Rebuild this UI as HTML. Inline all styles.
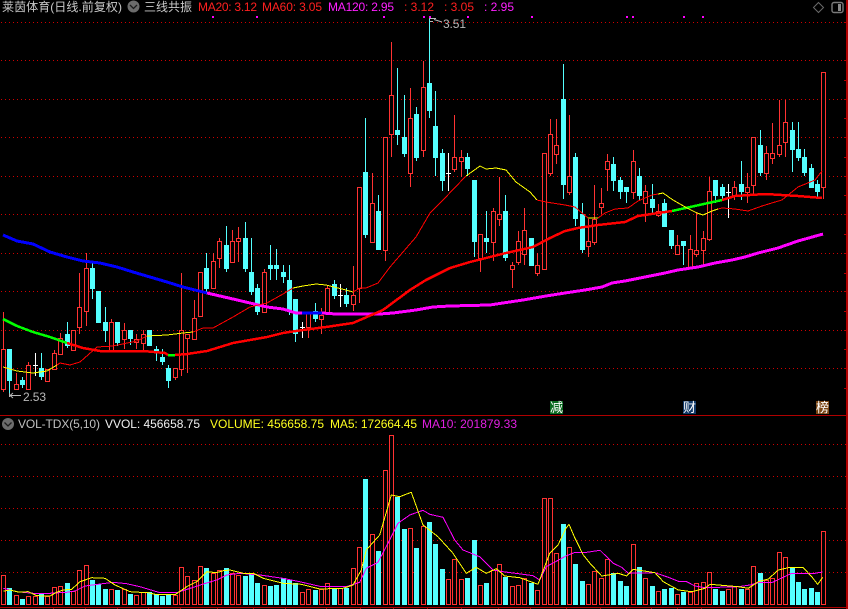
<!DOCTYPE html>
<html lang="zh">
<head>
<meta charset="utf-8">
<title>莱茵体育</title>
<style>
html,body{margin:0;padding:0;background:#000;width:848px;height:609px;overflow:hidden}
svg{display:block;position:absolute;left:0;top:0;overflow:hidden}
text{font-family:"Liberation Sans","Noto Sans CJK SC","WenQuanYi Zen Hei",sans-serif;font-size:12px}
</style>
</head>
<body>
<svg id="s" width="848" height="609" viewBox="0 0 848 609" xmlns="http://www.w3.org/2000/svg">
<g id="grid" shape-rendering="crispEdges"></g>
<g id="candles" shape-rendering="crispEdges"></g>
<g id="lines" fill="none" shape-rendering="crispEdges"></g>
<g id="marks" fill="#ff00ff" shape-rendering="crispEdges"></g>

<g>
<text x="2" y="11" fill="#c8c8c8" textLength="120" lengthAdjust="spacingAndGlyphs">莱茵体育(日线.前复权)</text>
<circle cx="133.500" cy="6.500" r="6" fill="#6c6c6c"/>
<path d="M130 5l3.500 3.500L137 5" stroke="#1c1c1c" stroke-width="1.300" fill="none"/>
<text x="144" y="11" fill="#c8c8c8" textLength="48" lengthAdjust="spacingAndGlyphs">三线共振</text>
<text x="198" y="11" fill="#ff2020" textLength="59">MA20: 3.12</text>
<text x="262" y="11" fill="#ff2020" textLength="60">MA60: 3.05</text>
<text x="328" y="11" fill="#ff20ff" textLength="66">MA120: 2.95</text>
<text x="404" y="11" fill="#ff2020" textLength="30">: 3.12</text>
<text x="444" y="11" fill="#ff2020" textLength="30">: 3.05</text>
<text x="484" y="11" fill="#ff20ff" textLength="30">: 2.95</text>
<path d="M818.500 2.500l5 5-5 5-5-5z" fill="none" stroke="#6a6a6a" stroke-width="1"/>
<rect x="832" y="2.500" width="11" height="10" rx="2" fill="none" stroke="#7a7a7a" stroke-width="1.400"/>
<rect x="838" y="4" width="3" height="7" fill="#8a8a8a"/>

<path d="M429.500 18V19M430 18.500H436M430 21.500H433M434 19.500L442 22" stroke="#b8b8b8" stroke-width="1" fill="none"/>
<text x="443" y="28" fill="#b8b8b8" textLength="23">3.51</text>
<path d="M9.500 393V397M10 395.500H21M10 395.500L13 393M10 395.500L13 398" stroke="#b8b8b8" stroke-width="1" fill="none"/>
<text x="23" y="401" fill="#b8b8b8" textLength="23">2.53</text>

<rect x="550" y="401" width="13" height="13" fill="#0a6a20"/>
<text x="550" y="412" fill="#fff" style="font-size:13px">减</text>
<rect x="683" y="401" width="13" height="13" fill="#123a68"/>
<text x="683" y="412" fill="#fff" style="font-size:13px">财</text>
<rect x="816" y="401" width="13" height="13" fill="#7a4514"/>
<text x="816" y="412" fill="#fff" style="font-size:13px">榜</text>

<circle cx="8" cy="424" r="6" fill="#6c6c6c"/>
<path d="M4.500 422.500l3.500 3.500 3.500-3.500" stroke="#1c1c1c" stroke-width="1.300" fill="none"/>
<text x="18" y="428" fill="#c0c0c0" textLength="82">VOL-TDX(5,10)</text>
<text x="105" y="428" fill="#f0f0f0" textLength="95">VVOL: 456658.75</text>
<text x="210" y="428" fill="#ffff20" textLength="114">VOLUME: 456658.75</text>
<text x="330" y="428" fill="#ffff20" textLength="87">MA5: 172664.45</text>
<text x="422" y="428" fill="#e020e0" textLength="95">MA10: 201879.33</text>
</g>
</svg>
<script>
var NS='http://www.w3.org/2000/svg';
function el(p,n,a){var e=document.createElementNS(NS,n);for(var k in a)e.setAttribute(k,a[k]);document.getElementById(p).appendChild(e);return e}
var RED='#ff3232',CY='#54ffff',DOT='#d00000';
[22,60,99,137,176,214,253,291,330,368,444,476,508,540,572].forEach(function(y){
  el('grid','line',{x1:1,x2:846,y1:y+.5,y2:y+.5,stroke:DOT,'stroke-width':1,'stroke-dasharray':'1 3'});
});
el('grid','rect',{x:0,y:415,width:848,height:1,fill:'#b00000'});
el('grid','rect',{x:0,y:607,width:848,height:1,fill:'#b00000'});
el('grid','rect',{x:846,y:0,width:2,height:609,fill:'#b00000'});
[22,60,80,99,118,137,157,176,195,214,234,253,273,291,311,330,349,368,388].forEach(function(y){
  el('grid','rect',{x:844,y:y,width:2,height:1,fill:'#b00000'});
});
[53,85,117,148,180,217,253,285,326,360,393,427,461,498,530,566,600,626,651,677,701].forEach(function(x){
  el('grid','rect',{x:x,y:608,width:1,height:1,fill:'#b00000'});
});
// type,top,bottom,high,low,volumeTopZoom
var D=[
'r,349,389,312,392,496','c,349,380,349,397,534','r,384,389,373,389,556','c,380,384,377,388,567','r,365,389,362,389,559',
'w,365,365,353,376,559','c,368,376,353,380,552','r,369,381,369,381,559','r,353,369,350,369,532','r,338,354,333,354,529',
'c,334,345,322,348,519','r,330,350,330,350,544','r,307,327,273,334,481','r,268,311,253,326,466','c,268,288,263,299,510',
'c,291,322,291,322,522','c,322,330,307,342,537','r,322,350,319,350,538','c,322,342,322,346,540','r,330,339,323,349,538',
'c,330,338,330,345,552','r,339,342,334,349,556','r,334,343,330,350,547','c,330,345,330,345,547','c,349,351,346,361,552',
'c,357,361,349,365,558','c,368,380,365,388,554','r,368,377,368,380,556','r,330,369,273,376,472','r,334,338,334,373,499',
'r,318,339,300,339,511','r,272,316,272,316,469','c,268,288,253,292,474','r,261,288,253,288,490','r,241,258,238,268,481',
'c,245,268,226,272,474','r,241,262,230,262,490','r,238,241,227,262,495','c,238,268,222,272,498','c,272,291,238,295,490',
'c,288,311,284,315,519','r,272,312,269,312,526','c,265,268,245,280,528','c,265,268,249,280,525','c,272,276,265,283,505',
'c,280,311,265,315,510','c,299,333,299,342,520','w,327,327,322,338,546','r,313,327,313,338,538','c,311,318,303,322,540',
'r,315,319,308,334,538','r,288,312,285,312,520','c,284,295,280,299,535','w,295,295,284,307,535','c,295,303,288,307,533',
'r,295,304,266,311,475','r,187,288,187,303,412','c,172,234,118,238,207','r,203,242,173,242,373','c,211,249,195,249,423',
'r,137,250,137,261,181','r,95,134,42,157,75','c,130,134,68,145,260','c,137,153,95,157,357','r,118,173,88,187,355',
'c,114,157,107,161,414','r,87,150,61,157,348','c,83,110,18,118,336','c,126,157,91,176,402','c,153,180,149,191,477',
'w,173,173,153,191,508','r,157,169,115,172,448','r,157,161,150,177,508','c,157,168,153,176,504','c,180,241,180,257,390',
'r,234,258,234,272,526','c,238,241,211,253,519','r,211,242,208,261,481','r,214,219,177,226,463','c,211,257,195,261,500',
'r,265,269,262,288,529','r,241,262,231,265,526','r,230,254,208,265,504','c,238,265,238,265,519','r,265,273,253,276,541',
'r,153,269,153,269,265','r,134,173,119,176,265','r,145,154,119,164,430','c,99,184,64,199,342','r,176,192,115,195,412',
'c,157,218,153,226,462','c,214,249,203,253,513','r,241,246,219,257,523','r,219,242,185,245,484','r,203,207,188,214,504',
'r,161,169,154,191,447','c,164,180,157,191,490','c,180,191,177,199,513','c,187,191,187,203,528','r,161,192,150,199,403',
'c,176,195,168,200,471','r,191,203,185,222,504','c,199,207,184,213,528','r,211,215,204,217,544','c,203,226,199,226,537',
'c,230,245,230,249,534','r,245,254,235,254,553','c,241,245,241,265,546','r,249,268,235,268,546','r,250,254,212,257,520',
'r,238,250,231,267,517','r,191,239,177,241,487','c,180,195,180,203,537','c,187,195,184,200,543','w,192,192,184,218,537',
'r,187,195,181,200,528','c,184,191,161,200,537','r,187,192,173,203,538','r,137,185,137,195,468','c,145,172,130,176,489',
'r,153,173,146,180,510','r,153,158,123,164,505','r,145,154,100,157,427','r,122,142,100,157,442','c,130,149,122,172,472',
'c,149,157,122,161,516','c,157,172,149,176,537','c,168,187,164,187,534','c,184,191,180,197,546','r,72,187,72,199,364'
];
D.forEach(function(s,i){
  var a=s.split(','),t=a[0],top=+a[1],bot=+a[2],hi=+a[3],lo=+a[4],v=410+a[5]/3,c=Math.floor(3.4+6.36*i);
  var col=t=='c'?CY:t=='w'?'#ffffff':RED;
  if(hi<top)el('candles','rect',{x:c,y:hi,width:1,height:top-hi,fill:col});
  if(lo>bot)el('candles','rect',{x:c,y:bot,width:1,height:lo-bot,fill:col});
  if(t=='c')el('candles','rect',{x:c-2,y:top,width:5,height:bot-top+1,fill:CY});
  else if(t=='w'){el('candles','rect',{x:c-2,y:top,width:5,height:1,fill:'#fff'});}
  else el('candles','rect',{x:c-1.5,y:top+.5,width:4,height:bot-top,fill:'#000',stroke:RED,'stroke-width':1});
  var vt=Math.round(v);
  if(t=='c')el('candles','rect',{x:c-2,y:vt,width:5,height:605-vt,fill:CY});
  else el('candles','rect',{x:c-1.5,y:vt+.5,width:4,height:605-vt-1,fill:'#000',stroke:RED,'stroke-width':1});
});
function pl(c,w,p){el('lines','polyline',{points:p,stroke:c,'stroke-width':w,'stroke-linejoin':'round'})}
var Y='#ffff00',M='#ff00ff',R='#ff0000',G='#00ff00',B='#0000ff';
// MA120
pl(B,3,'3,235 17,241 33,244 50,252 67,257 83,261 100,263 117,267 133,272 150,277 167,282 183,287 207,293');
pl(M,3,'207,293 233,299 250,303 267,307 283,309 296,313 302,313');
pl(B,3,'302,313 322,313');
pl(M,3,'322,313 336,314 380,314 393,313 416,310 433,307 450,306 490,305 503,303 523,300 546,296 565,293 585,290 602,287 612,283 625,281 645,277 665,273 678,270 698,267 715,263 732,260 745,257 758,253 778,248 798,241 823,234');
// MA60
pl(G,2.5,'3,319 17,326 33,332 50,337 67,343');
pl(R,2.5,'67,343 83,348 100,351 143,351 165,353 168,355');
pl(G,2.5,'168,355 175,355');
pl(R,2.5,'175,355 187,354 207,351 233,343 250,340 267,337 283,333 303,330 326,327 353,323 383,310 410,290 426,280 450,268 470,262 506,253 533,247 550,238 565,231 578,228 598,225 625,222 638,216 672,211');
pl(G,2.5,'672,211 722,200');
pl(R,2.5,'722,200 735,196 765,194 798,196 822,198');
// MA20
pl(Y,1,'3,367 17,371 33,373 47,371 57,365');
pl(R,1,'57,365 60,363 70,365 80,362 97,347 113,346 137,341 147,336');
pl(Y,1,'147,336 167,335 183,333 193,332');
pl(R,1,'193,332 203,328 213,328 233,317 250,307 267,303 283,294 293,288');
pl(Y,1,'293,288 303,286 316,284 326,285 346,290 353,292');
pl(R,1,'353,292 360,288 366,288 378,283 390,267 416,237 430,213 443,200 466,176');
pl(Y,1,'466,176 480,166 486,169 496,168 506,170 516,182 530,192 537,200');
pl(R,1,'537,200 546,202 565,205 575,207 582,213 588,218');
pl(Y,1,'588,218 598,218');
pl(R,1,'598,218 605,213 615,209 628,208 638,201 652,195 658,194');
pl(Y,1,'658,194 663,193 673,200 687,208 697,213 703,215 712,211 718,209');
pl(R,1,'718,209 722,208 735,209 748,211 762,206 775,202 782,200 798,187 815,180 822,171');
// volume averages
function zp(ox,s){return s.trim().split(/\s+/).map(function(q){var p=q.split(',');return (ox+p[0]/3).toFixed(1)+','+(410+p[1]/3).toFixed(1)}).join(' ')}
pl(M,1,zp(0,'10,535 50,545 100,550 150,550 200,547 225,543 255,528 340,517 380,521 420,530 480,548 530,548 555,540 610,522 650,510 680,495 720,490 780,495 849,505')+' '+zp(283,'50,515 110,529 190,530 230,517 250,475 285,457 320,390 345,340 380,315 420,301 440,313 480,322 515,390 540,420 590,440 630,480 660,485 720,493 750,497 770,510 790,470 849,438')+' '+zp(565,'30,427 65,427 105,421 145,460 170,472 190,490 270,488 310,502 340,514 365,515 390,528 420,533 520,530 555,525 580,518 620,518 680,490 750,490 772,486'));
pl(Y,1,zp(0,'10,544 30,540 55,546 85,545 110,557 150,558 170,547 190,540 215,538 240,515 275,503 315,505 345,525 390,545 420,547 440,547 465,553 525,554 560,530 590,515 620,485 650,488 670,482 690,480 730,490 760,490 790,505 849,520')+' '+zp(283,'55,523 110,537 180,535 210,525 235,480 250,420 290,375 325,255 350,260 385,247 420,345 465,380 510,430 550,490 580,472 610,490 640,476 665,498 710,503 765,523 800,430 825,405 849,355')+' '+zp(565,'12,343 30,385 55,435 75,460 110,498 130,495 160,490 185,498 205,478 270,488 295,515 340,540 380,545 420,535 435,523 520,530 550,535 580,515 610,507 640,480 670,473 715,473 740,500 758,523 773,502'));
[212,256,383,423,429,467,531,626,632,683,702].forEach(function(x){el('marks','rect',{x:x,y:16,width:2,height:2})});
</script>
</body>
</html>
